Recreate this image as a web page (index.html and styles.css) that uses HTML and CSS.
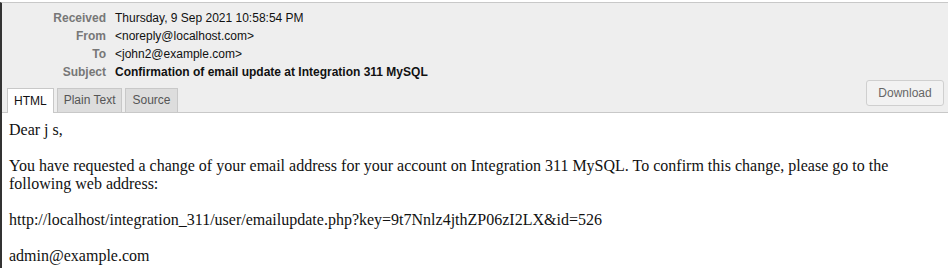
FILE: index.html
```html
<!DOCTYPE html>
<html>
<head>
<meta charset="utf-8">
<link rel="stylesheet" href="styles.css">
</head>
<body>
<div class="frame">
  <div class="header">
    <div class="meta">
      <div class="label">Received</div><div class="value">Thursday, 9 Sep 2021 10:58:54 PM</div>
      <div class="label">From</div><div class="value">&lt;noreply@localhost.com&gt;</div>
      <div class="label">To</div><div class="value">&lt;john2@example.com&gt;</div>
      <div class="label">Subject</div><div class="value subject">Confirmation of email update at Integration 311 MySQL</div>
    </div>
    <div class="tabbar">
      <div class="tabs">
        <div class="tab active">HTML</div>
        <div class="tab">Plain Text</div>
        <div class="tab">Source</div>
      </div>
      <button class="download">Download</button>
    </div>
  </div>
  <div class="message">Dear j s,<br><br>You have requested a change of your email address for your account on Integration 311 MySQL. To confirm this change, please go to the following web address:<br><br>http://localhost/integration_311/user/emailupdate.php?key=9t7Nnlz4jthZP06zI2LX&amp;id=526<br><br>admin@example.com</div>
</div>
</body>
</html>
```
FILE: styles.css
```css
html, body {
  margin: 0;
  padding: 0;
  background: #fff;
}
body {
  padding-top: 2px;
}
.frame {
  border-top: 1px solid #c8c8c8;
  border-left: 2px solid #333;
  height: 266px;
  box-sizing: border-box;
  overflow: hidden;
}
.header {
  background: #eeeeee;
  border-bottom: 1px solid #c8c8c8;
  font-family: "Liberation Sans", Arial, sans-serif;
  font-size: 12px;
  padding-top: 6px;
}
.meta {
  display: grid;
  grid-template-columns: 104px 1fr;
  column-gap: 9px;
  row-gap: 0;
}
.label {
  text-align: right;
  color: #777;
  font-weight: bold;
  line-height: 18px;
}
.value {
  color: #111;
  line-height: 18px;
}
.subject {
  font-weight: bold;
}
.tabbar {
  display: flex;
  justify-content: space-between;
  align-items: flex-start;
  padding: 0 4px 0 5px;
  height: 31px;
}
.tabs {
  display: flex;
  gap: 3px;
  align-self: flex-end;
  margin-bottom: -1px;
}
.tab {
  background: #dddddd;
  border: 1px solid #c8c8c8;
  border-bottom: none;
  color: #555;
  padding: 0 6px;
  height: 24px;
  line-height: 22px;
  box-sizing: border-box;
}
.tab.active {
  background: #fff;
  color: #111;
  height: 25px;
  line-height: 25px;
}
.download {
  font-family: "Liberation Sans", Arial, sans-serif;
  font-size: 12px;
  color: #666;
  background: #f2f2f2;
  border: 1px solid #cfcfcf;
  border-radius: 3px;
  width: 78px;
  height: 26px;
  padding: 0;
  margin-top: -1px;
}
.message {
  font-family: "Liberation Serif", "Times New Roman", serif;
  font-size: 16px;
  color: #111;
  padding: 8px 7px;
  line-height: 18px;
}
```
